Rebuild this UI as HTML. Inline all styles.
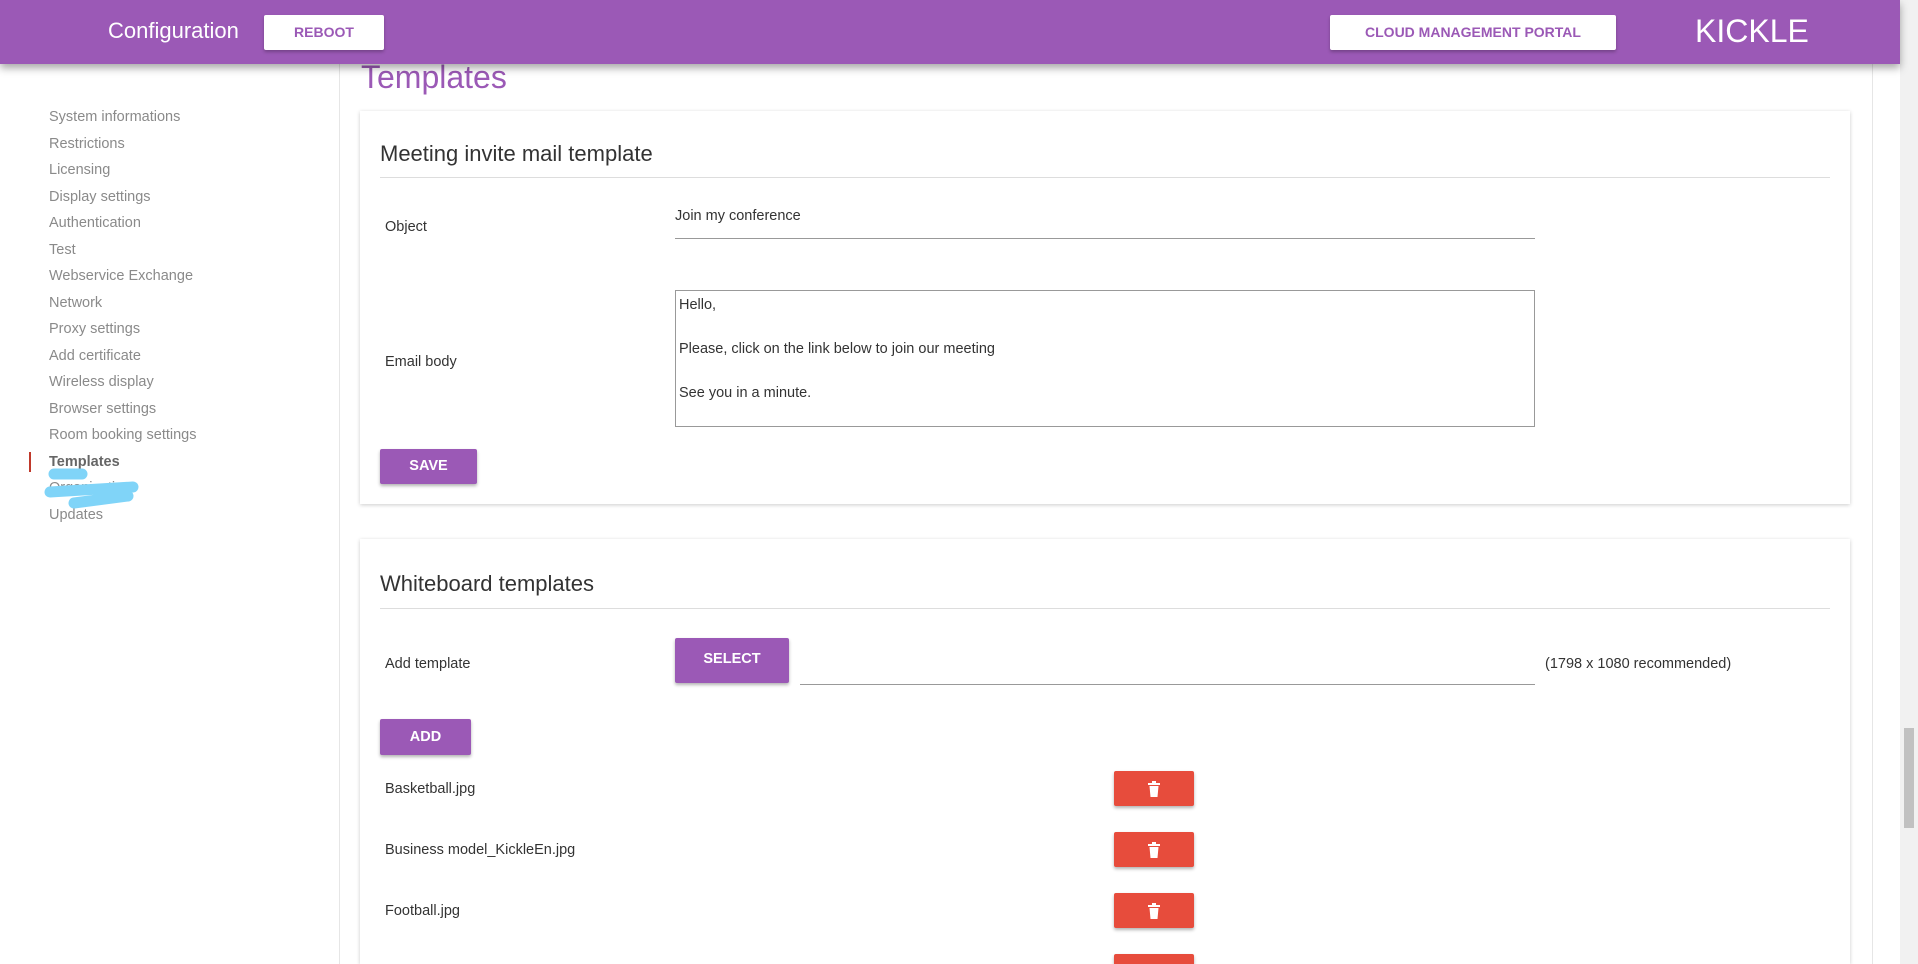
<!DOCTYPE html>
<html style="overflow:hidden;height:964px"><head><meta charset="utf-8"><style>
*{box-sizing:border-box;margin:0;padding:0}
body{width:1918px;height:964px;overflow:hidden;background:#fff;font-family:"Liberation Sans",sans-serif;position:relative;color:#333}
.hdr{position:absolute;left:0;top:0;width:1900px;height:64px;background:#9b59b6;box-shadow:0 4px 8px rgba(0,0,0,.35);z-index:5}
.hdr .t{position:absolute;left:108px;top:18px;color:#fff;font-size:22px}
.wb{position:absolute;background:#fff;color:#9b59b6;font-weight:bold;font-size:14px;text-align:center;border-radius:2px;box-shadow:0 2px 3px rgba(0,0,0,.25);line-height:35px}
.k{position:absolute;left:1695px;top:13px;color:#fff;font-size:32px}
.sb{position:absolute;left:1900px;top:0;width:18px;height:964px;background:#f1f1f1}
.thumb{position:absolute;left:1904px;top:728px;width:10px;height:100px;background:#c1c1c1}
.side{position:absolute;left:339px;top:0;width:1px;height:964px;background:#e6e6e6}
.side2{position:absolute;left:1872px;top:0;width:1px;height:964px;background:#e6e6e6}
.nav{position:absolute;left:49px;font-size:14.5px;color:#8a8a8a}
.ttl{position:absolute;left:361px;top:59px;font-size:32px;color:#9b59b6}
.card{position:absolute;left:360px;width:1490px;background:#fff;box-shadow:0 1px 4px rgba(0,0,0,.2)}
.ct{position:absolute;left:20px;font-size:22px;color:#333}
.hr{position:absolute;left:20px;width:1450px;height:1px;background:#ddd}
.lb{position:absolute;font-size:14.5px;color:#333}
.pb{position:absolute;background:#9b59b6;color:#fff;font-weight:bold;font-size:14.5px;text-align:center;border-radius:2px;box-shadow:0 2px 3px rgba(0,0,0,.3)}
.del{position:absolute;left:754px;width:80px;height:35px;background:#e74c3c;border-radius:2px;box-shadow:0 2px 3px rgba(0,0,0,.3)}
.del svg{position:absolute;left:33px;top:10px}
</style></head><body>
<div class="hdr"><div class="t">Configuration</div>
<div class="wb" style="left:264px;top:15px;width:120px;height:35px">REBOOT</div>
<div class="wb" style="left:1330px;top:15px;width:286px;height:35px">CLOUD MANAGEMENT PORTAL</div>
<div class="k">KICKLE</div></div>
<div class="sb"></div><div class="thumb"></div>
<div class="side"></div><div class="side2"></div>
<div class="nav" style="top:109px">System informations</div>
<div class="nav" style="top:136px">Restrictions</div>
<div class="nav" style="top:162px">Licensing</div>
<div class="nav" style="top:189px">Display settings</div>
<div class="nav" style="top:215px">Authentication</div>
<div class="nav" style="top:242px">Test</div>
<div class="nav" style="top:268px">Webservice Exchange</div>
<div class="nav" style="top:295px">Network</div>
<div class="nav" style="top:321px">Proxy settings</div>
<div class="nav" style="top:348px">Add certificate</div>
<div class="nav" style="top:374px">Wireless display</div>
<div class="nav" style="top:401px">Browser settings</div>
<div class="nav" style="top:427px">Room booking settings</div>
<div style="position:absolute;left:29px;top:452px;width:2px;height:20px;background:#c0392b"></div>
<div class="nav" style="top:454px;color:#666;font-weight:bold">Templates</div>
<div class="nav" style="top:480px">Organization</div>
<div class="nav" style="top:507px">Updates</div>
<svg style="position:absolute;left:40px;top:465px" width="110" height="50"><path d="M14 9 L42 9 M10 27 L93 22 M34 38 L88 31" stroke="#80d4f8" stroke-width="11" stroke-linecap="round" fill="none"/></svg>
<div class="ttl">Templates</div>
<div class="card" style="top:111px;height:393px">
<div class="ct" style="top:30px">Meeting invite mail template</div>
<div class="hr" style="top:66px"></div>
<div class="lb" style="left:25px;top:108px">Object</div>
<div class="lb" style="left:315px;top:97px">Join my conference</div>
<div style="position:absolute;left:315px;top:127px;width:860px;height:1px;background:#999"></div>
<div class="lb" style="left:25px;top:243px">Email body</div>
<div style="position:absolute;left:315px;top:179px;width:860px;height:137px;border:1px solid #999;padding:3px;font-size:14.5px;line-height:22px;color:#333">Hello,<br><br>Please, click on the link below to join our meeting<br><br>See you in a minute.</div>
<div class="pb" style="left:20px;top:338px;width:97px;height:35px;line-height:35px">SAVE</div>
</div>
<div class="card" style="top:539px;height:425px">
<div class="ct" style="top:32px">Whiteboard templates</div>
<div class="hr" style="top:69px"></div>
<div class="lb" style="left:25px;top:117px">Add template</div>
<div class="pb" style="left:315px;top:99px;width:114px;height:45px;line-height:42px">SELECT</div>
<div style="position:absolute;left:440px;top:145px;width:735px;height:1px;background:#999"></div>
<div class="lb" style="left:1185px;top:117px">(1798 x 1080 recommended)</div>
<div class="pb" style="left:20px;top:180px;width:91px;height:36px;line-height:36px">ADD</div>
<div class="lb" style="left:25px;top:242px">Basketball.jpg</div>
<div class="lb" style="left:25px;top:303px">Business model_KickleEn.jpg</div>
<div class="lb" style="left:25px;top:364px">Football.jpg</div>
<div class="del" style="top:232px"><svg width="14" height="16" viewBox="0 0 14 16"><rect x="1" y="2" width="12" height="2" fill="#fff"/><rect x="5" y="0" width="4" height="2" fill="#fff"/><path d="M2.5 5 H11.5 L10.5 16 H3.5 Z" fill="#fff"/></svg></div>
<div class="del" style="top:293px"><svg width="14" height="16" viewBox="0 0 14 16"><rect x="1" y="2" width="12" height="2" fill="#fff"/><rect x="5" y="0" width="4" height="2" fill="#fff"/><path d="M2.5 5 H11.5 L10.5 16 H3.5 Z" fill="#fff"/></svg></div>
<div class="del" style="top:354px"><svg width="14" height="16" viewBox="0 0 14 16"><rect x="1" y="2" width="12" height="2" fill="#fff"/><rect x="5" y="0" width="4" height="2" fill="#fff"/><path d="M2.5 5 H11.5 L10.5 16 H3.5 Z" fill="#fff"/></svg></div>
<div class="del" style="top:415px;height:10px;border-radius:2px 2px 0 0"></div>
</div>
</body></html>
